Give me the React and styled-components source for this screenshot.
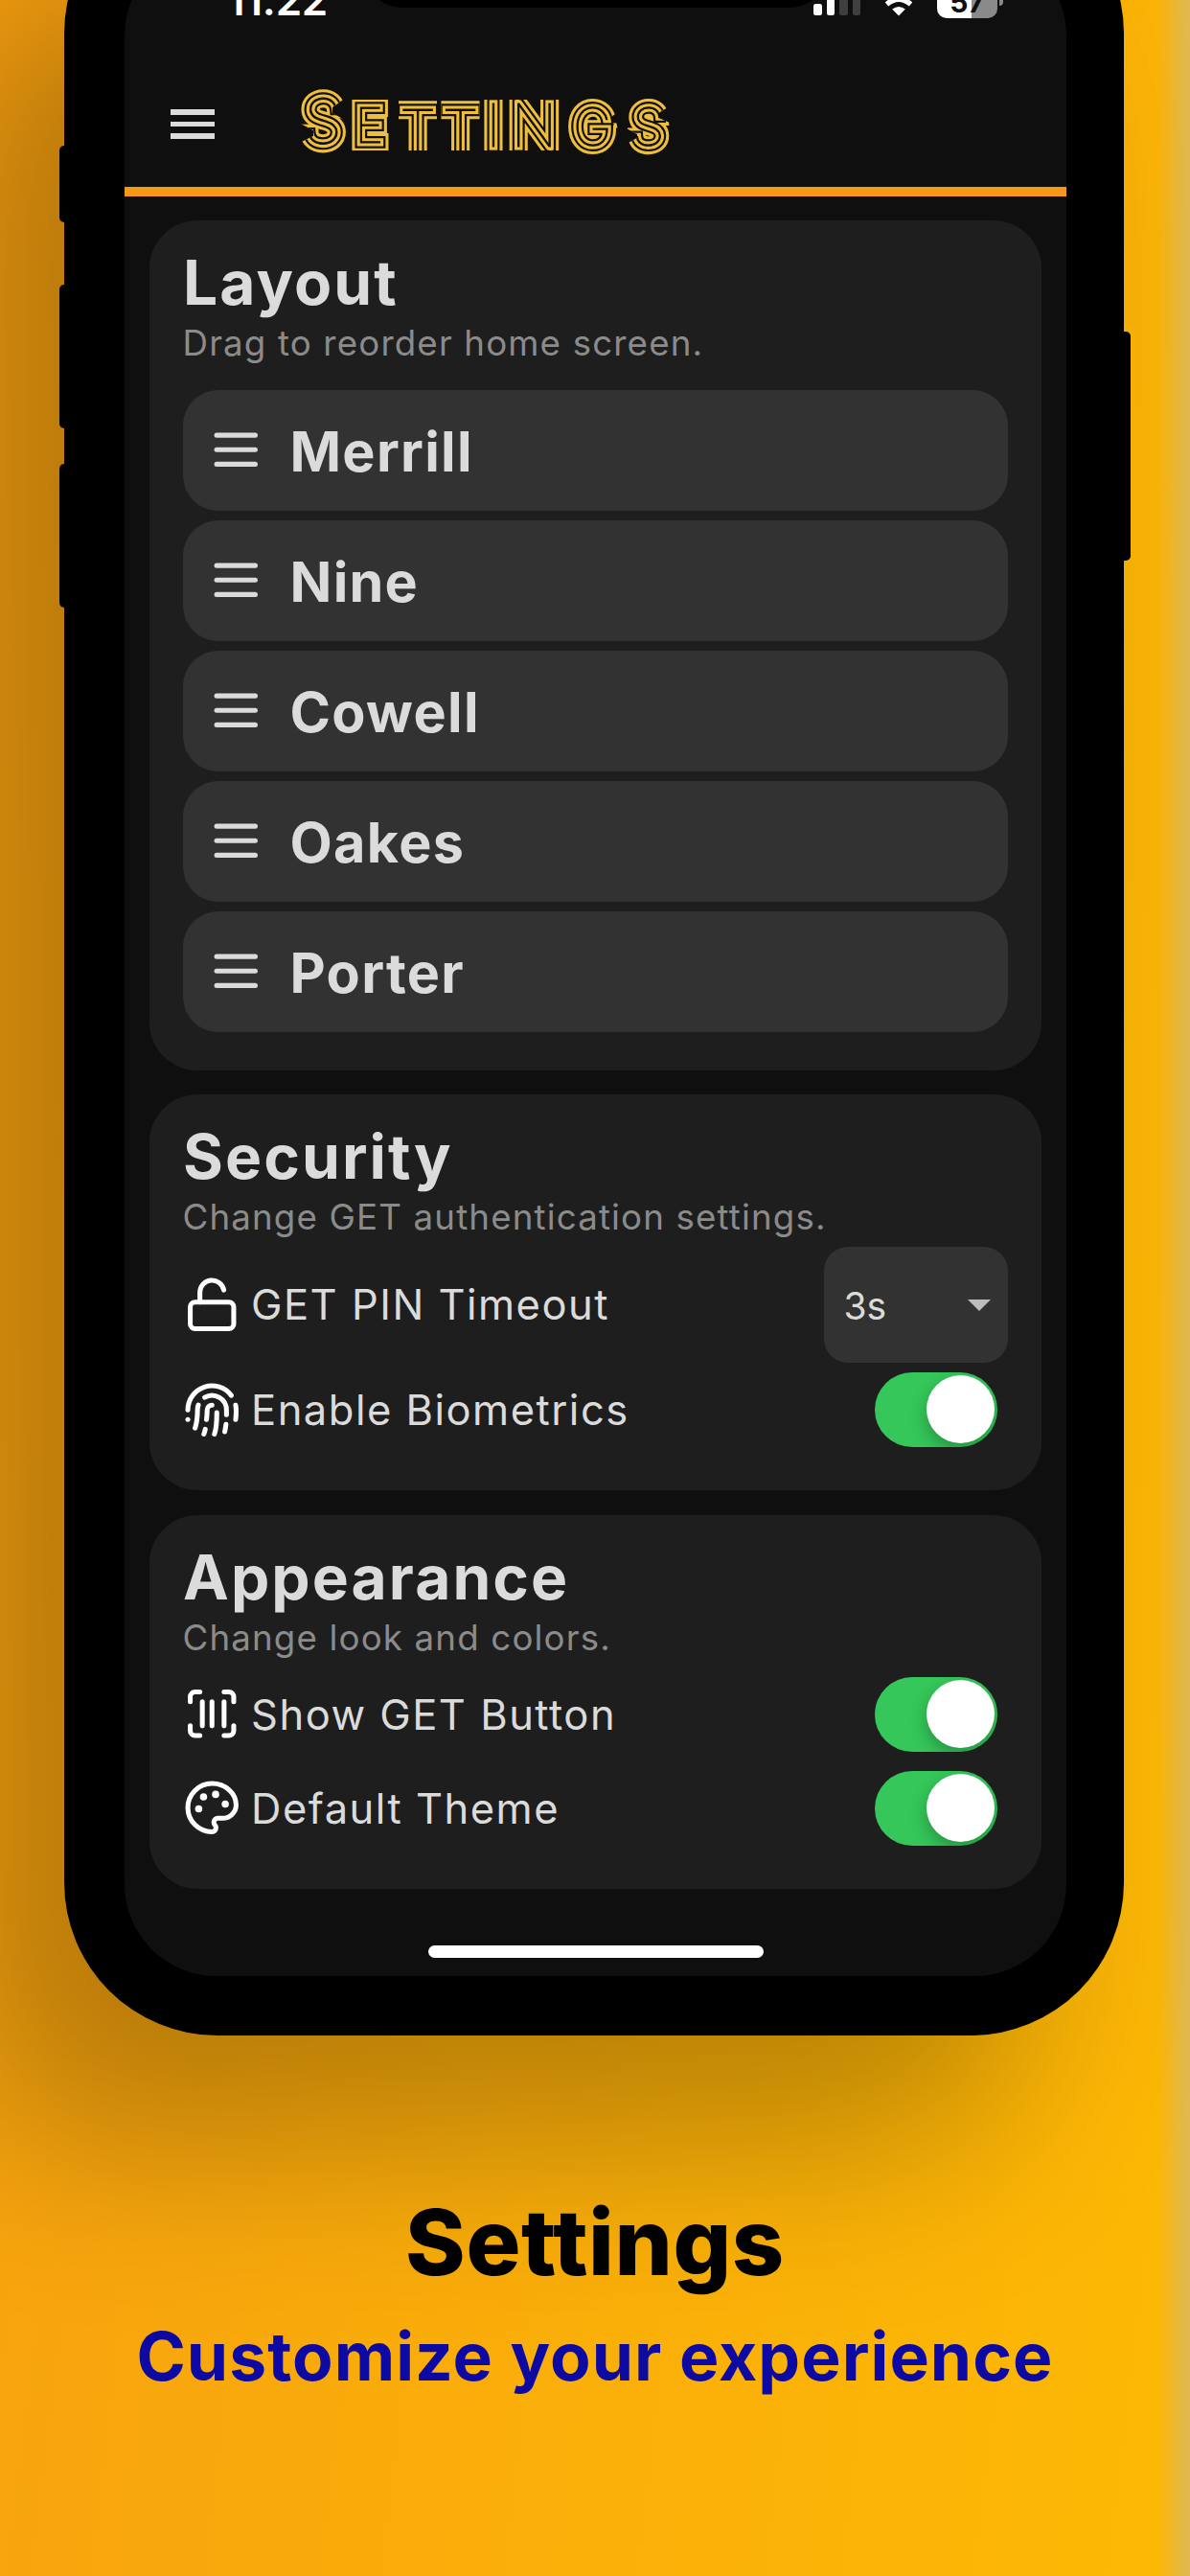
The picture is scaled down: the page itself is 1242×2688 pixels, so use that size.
import React from "react";
import styled, { createGlobalStyle } from "styled-components";

const GlobalStyle = createGlobalStyle`
  * { box-sizing: border-box; }
  body { margin: 0; }
`;

const sans = `Inter, "Liberation Sans", sans-serif`;

const Page = styled.div`
  width: 1242px;
  height: 2688px;
  overflow: hidden;
  display: flex;
  flex-direction: column;
  align-items: flex-start;
  font-family: ${sans};
  background:
    linear-gradient(90deg, rgba(226, 185, 74, 0) 1208px, #e2b94a 1236px),
    linear-gradient(97deg, #f69f10 0%, #faad0a 50%, #fdb904 100%);
`;

const Phone = styled.div`
  position: relative;
  width: 1106px;
  height: 2249px;
  margin: -125px 0 0 67px;
  padding: 66px 60px 62px 63px;
  flex: none;
  border-radius: 160px;
  background: #000;
  box-shadow: -105px 115px 190px rgba(0, 0, 0, 0.26);
`;

const SideButton = styled.div`
  position: absolute;
  top: ${(p) => p.$top + 125}px;
  height: ${(p) => p.$height}px;
  width: 16px;
  ${(p) => (p.$right ? "right: -7px" : "left: -5px")};
  border-radius: 5px;
  background: #000;
`;

const Screen = styled.div`
  width: 983px;
  height: 2121px;
  display: flex;
  flex-direction: column;
  overflow: hidden;
  border-radius: 96px;
  background: #0f0f0f;
`;

const Notch = styled.div`
  position: absolute;
  top: 60px;
  left: 313px;
  width: 484px;
  height: 73px;
  border-radius: 0 0 40px 40px;
  background: #000;
`;

const StatusBar = styled.div`
  height: 83px;
  flex: none;
  display: flex;
  align-items: flex-end;
  justify-content: space-between;
  padding: 0 66px 5px 107px;
`;

const Time = styled.div`
  font-size: 44px;
  font-weight: 600;
  line-height: 44px;
  height: 41px;
  letter-spacing: -0.2px;
  color: #fff;
`;

const StatusIcons = styled.div`
  display: flex;
  align-items: flex-end;
`;

const Signal = styled.div`
  display: flex;
  align-items: flex-end;
  gap: 5px;
  margin: 0 15px 3px 0;
`;

const Bar = styled.span`
  width: 8.5px;
  height: ${(p) => p.$height}px;
  border-radius: 2.5px;
  background: ${(p) => (p.$on ? "#fff" : "#3f3f3f")};
`;

const Battery = styled.div`
  width: 63px;
  height: 32px;
  margin-left: 15px;
  border-radius: 10px;
  background: linear-gradient(90deg, #fff 36px, #8a8a8a 36px);
  color: #0f0f0f;
  font-size: 30px;
  font-weight: 700;
  line-height: 31px;
  text-align: center;
`;

const Nub = styled.span`
  width: 4px;
  height: 12px;
  margin: 0 0 13px 2px;
  border-radius: 0 5px 5px 0;
  background: #8a8a8a;
`;

const Header = styled.header`
  height: 181px;
  flex: none;
  display: flex;
  align-items: center;
  padding: 40px 0 0 48px;
  border-bottom: 10px solid #f49817;
`;

const MenuButton = styled.div`
  width: 46px;
  display: flex;
  flex-direction: column;
  gap: 7px;
`;

const MenuLine = styled.span`
  height: 5.6px;
  background: #dbdbdb;
`;

const Wordmark = styled.svg`
  width: 400px;
  height: 90px;
  margin: 0 0 9px 81px;
  font-family: ${sans};
  font-weight: 100;
`;

const Content = styled.main`
  display: flex;
  flex-direction: column;
  gap: 25.7px;
  padding: 25px 26px 0 25.5px;
`;

const Card = styled.section`
  height: ${(p) => p.$height}px;
  padding: 33px 35.5px 0 35px;
  border-radius: 50px;
  background: #1e1e1e;
`;

const CardHead = styled.div`
  height: ${(p) => p.$height}px;
  display: flex;
  flex-direction: column;
  gap: 11px;
`;

const Title = styled.h2`
  margin: 0;
  padding-left: 0.5px;
  font-size: 64px;
  font-weight: 700;
  line-height: 64px;
  letter-spacing: 2.1px;
  color: #dbdbdb;
`;

const Subtitle = styled.p`
  margin: 0;
  font-size: 36.7px;
  line-height: 40px;
  letter-spacing: 1.15px;
  color: #8b8b8b;
`;

const DragList = styled.div`
  display: flex;
  flex-direction: column;
  gap: 10px;
`;

const DragRow = styled.div`
  height: 126px;
  display: flex;
  align-items: center;
  gap: 26.5px;
  padding-left: 25px;
  border-radius: 37px;
  background: #323232;
`;

const DragLabel = styled.span`
  padding-top: 2.5px;
  font-size: 57.5px;
  font-weight: 700;
  letter-spacing: 1.3px;
  color: #dbdbdb;
`;

const OptionRow = styled.div`
  height: ${(p) => p.$height}px;
  display: flex;
  align-items: center;
`;

const OptionLabel = styled.span`
  flex: 1;
  padding-left: 11px;
  font-size: 43.5px;
  letter-spacing: 1.5px;
  color: #dbdbdb;
`;

const Select = styled.div`
  width: 192px;
  height: 121px;
  display: flex;
  align-items: center;
  justify-content: space-between;
  padding: 2px 18px 0 21px;
  border-radius: 25px;
  background: #323232;
  color: #dbdbdb;
  font-size: 39px;
`;

const Caret = styled.span`
  border: 12px solid transparent;
  border-top: 12px solid #bdbdbd;
  border-bottom: 0;
`;

const Toggle = styled.div`
  width: 128px;
  height: 78px;
  margin-right: 10.5px;
  padding: 3.5px;
  display: flex;
  justify-content: flex-end;
  border-radius: 39px;
  background: #35c759;
  overflow: hidden;
`;

const Knob = styled.span`
  width: 71px;
  height: 71px;
  border-radius: 50%;
  background: #fff;
  box-shadow: 0 7px 18px rgba(0, 0, 0, 0.28);
`;

const HomeBar = styled.div`
  width: 350px;
  height: 13px;
  margin: auto 0 19.5px 317px;
  flex: none;
  border-radius: 7px;
  background: #fff;
`;

const Caption = styled.div`
  align-self: stretch;
  text-align: center;
`;

const CaptionTitle = styled.h1`
  margin: 158px 0 0;
  font-size: 95px;
  font-weight: 800;
  line-height: 116px;
  letter-spacing: 0.6px;
  font-feature-settings: "calt" 0;
  color: #000;
`;

const CaptionText = styled.p`
  margin: 19px 0 0;
  font-size: 69.5px;
  font-weight: 700;
  line-height: 84px;
  letter-spacing: 1.05px;
  color: #0d0aa3;
`;

const IconSvg = styled.svg`
  width: 60.5px;
  height: 60.5px;
  flex: none;
  fill: none;
  stroke: ${(p) => p.$color || "#fff"};
  stroke-width: 2;
  stroke-linecap: round;
  stroke-linejoin: round;
`;

const Dot = styled.path`
  stroke-width: 3;
`;

const icons = {
  grip: { lines: ["M4 6h16", "M4 12h16", "M4 18h16"] },
  lock: {
    lines: [
      "M5 11h14a2 2 0 0 1 2 2v7a2 2 0 0 1-2 2H5a2 2 0 0 1-2-2v-7a2 2 0 0 1 2-2z",
      "M7 11V7a5 5 0 0 1 9.900-1",
    ],
  },
  fingerprint: {
    lines: [
      "M12 10a2 2 0 0 0-2 2c0 1.020-.1 2.510-.26 4",
      "M14 13.120c0 2.380 0 6.380-1 8.880",
      "M17.290 21.020c.12-.6.43-2.300.5-3.020",
      "M2 12a10 10 0 0 1 18-6",
      "M2 16h.01",
      "M21.800 16c.2-2 .131-5.354 0-6",
      "M5 19.500C5.500 18 6 15 6 12a6 6 0 0 1 .34-2",
      "M8.650 22c.21-.66.45-1.320.57-2",
      "M9 6.800a6 6 0 0 1 9 5.200v2",
    ],
  },
  barcode: {
    lines: [
      "M3 7V5a2 2 0 0 1 2-2h2",
      "M17 3h2a2 2 0 0 1 2 2v2",
      "M21 17v2a2 2 0 0 1-2 2h-2",
      "M7 21H5a2 2 0 0 1-2-2v-2",
      "M8 7v10",
      "M12 7v10",
      "M17 7v10",
    ],
  },
  palette: {
    lines: [
      "M12 2C6.500 2 2 6.500 2 12s4.500 10 10 10c.926 0 1.648-.746 1.648-1.688 0-.437-.18-.835-.437-1.125-.29-.289-.438-.652-.438-1.125a1.640 1.640 0 0 1 1.668-1.668h1.996c3.051 0 5.555-2.503 5.555-5.554C21.965 6.012 17.461 2 12 2z",
    ],
    dots: ["M13.500 6.500h.01", "M17.500 10.500h.01", "M8.500 7.500h.01", "M6.500 12.500h.01"],
  },
};

function Icon({ name, color }) {
  const { lines, dots = [] } = icons[name];
  return (
    <IconSvg viewBox="0 0 24 24" $color={color}>
      {lines.map((d) => (
        <path key={d} d={d} />
      ))}
      {dots.map((d) => (
        <Dot key={d} d={d} />
      ))}
    </IconSvg>
  );
}

// Thin letters stroked in alternating widths give the concentric neon lines;
// the clip trims their ends so the lines stay open.
function NeonWordmark() {
  return (
    <Wordmark viewBox="305 80 400 90">
      <clipPath id="trim">
        <path
          clipRule="evenodd"
          d="M305 80h60v90h-60z M365.500 104h45v53h-45z M416 104h40v53h-40z M460.500 104h40v53h-40z M505 104h81v53h-81z M587 80h120v90h-120z
             M365 99L347 112L347 118L365 128z M306 152L327 142L327 136L306 125z
             M652 112L638 122L638 128L649 129z
             M704 108L687 118L687 123L704 130z M650 152L665 144L665 140L650 132z"
        />
      </clipPath>
      <g clipPath="url(#trim)">
        <g fill="#efbf3c" stroke="#efbf3c" strokeWidth="17.700">
          <text id="wordmark" y="150.300" fontSize="65" x="317.200">
            S
            <tspan y="149" fontSize="51" x="370.500">E</tspan>
            <tspan y="158.500" fontSize="62" x="417 461.500">TT</tspan>
            <tspan y="153" fontSize="62" x="507.200 533.600">IN</tspan>
            <tspan y="151.500" fontSize="55" x="598 660">GS</tspan>
          </text>
        </g>
        <use href="#wordmark" stroke="#0f0f0f" strokeWidth="11.600" />
        <use href="#wordmark" stroke="#efbf3c" strokeWidth="7.200" />
        <use href="#wordmark" stroke="#0f0f0f" fill="#0f0f0f" strokeWidth="1" />
      </g>
    </Wordmark>
  );
}

function Switch() {
  return (
    <Toggle>
      <Knob />
    </Toggle>
  );
}

function Option({ icon, label, height = 98, children }) {
  return (
    <OptionRow $height={height}>
      <Icon name={icon} />
      <OptionLabel>{label}</OptionLabel>
      {children}
    </OptionRow>
  );
}

function SettingsCard({ title, subtitle, height, headHeight = 125.7, children }) {
  return (
    <Card $height={height}>
      <CardHead $height={headHeight}>
        <Title>{title}</Title>
        <Subtitle>{subtitle}</Subtitle>
      </CardHead>
      {children}
    </Card>
  );
}

const places = ["Merrill", "Nine", "Cowell", "Oakes", "Porter"];

export default function App() {
  return (
    <Page>
      <GlobalStyle />
      <Phone>
        <SideButton $top={152} $height={80} />
        <SideButton $top={297} $height={150} />
        <SideButton $top={484} $height={150} />
        <SideButton $right $top={346} $height={239} />
        <Screen>
          <StatusBar>
            <Time>11:22</Time>
            <StatusIcons>
              <Signal>
                <Bar $on $height={12} />
                <Bar $on $height={18} />
                <Bar $height={25} />
                <Bar $height={32} />
              </Signal>
              <svg width="50" height="36" viewBox="0 0 50 36" fill="none">
                <path d="M25 33.500L18.200 26.500Q25 21.500 31.800 26.500Z" fill="#fff" />
                <path d="M12.500 21.500Q25 11 37.500 21.500" stroke="#fff" strokeWidth="5.500" />
                <path d="M4 13Q25 -5 46 13" stroke="#fff" strokeWidth="5.500" />
              </svg>
              <Battery>57</Battery>
              <Nub />
            </StatusIcons>
          </StatusBar>
          <Header>
            <MenuButton>
              <MenuLine />
              <MenuLine />
              <MenuLine />
            </MenuButton>
            <NeonWordmark />
          </Header>
          <Content>
            <SettingsCard title="Layout" subtitle="Drag to reorder home screen." height={886.6} headHeight={143.5}>
              <DragList>
                {places.map((place) => (
                  <DragRow key={place}>
                    <Icon name="grip" color="#dbdbdb" />
                    <DragLabel>{place}</DragLabel>
                  </DragRow>
                ))}
              </DragList>
            </SettingsCard>
            <SettingsCard title="Security" subtitle="Change GET authentication settings." height={413}>
              <Option icon="lock" label="GET PIN Timeout" height={121}>
                <Select>
                  3s
                  <Caret />
                </Select>
              </Option>
              <Option icon="fingerprint" label="Enable Biometrics">
                <Switch />
              </Option>
            </SettingsCard>
            <SettingsCard title="Appearance" subtitle="Change look and colors." height={390}>
              <Option icon="barcode" label="Show GET Button">
                <Switch />
              </Option>
              <Option icon="palette" label="Default Theme">
                <Switch />
              </Option>
            </SettingsCard>
          </Content>
          <HomeBar />
        </Screen>
        <Notch />
      </Phone>
      <Caption>
        <CaptionTitle>Settings</CaptionTitle>
        <CaptionText>Customize your experience</CaptionText>
      </Caption>
    </Page>
  );
}
